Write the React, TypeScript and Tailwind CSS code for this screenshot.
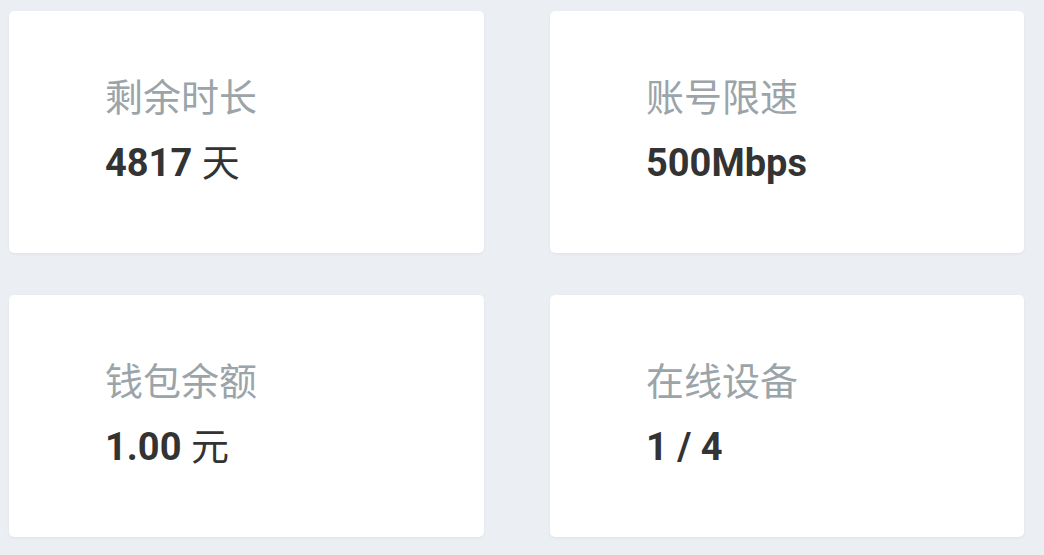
type Stat = {
  label: string;
  value: string;
  unit?: string;
};

const stats: Stat[] = [
  { label: "剩余时长", value: "4817", unit: "天" },
  { label: "账号限速", value: "500Mbps" },
  { label: "钱包余额", value: "1.00", unit: "元" },
  { label: "在线设备", value: "1 / 4" },
];

function StatCard({ stat }: { stat: Stat }) {
  return (
    <section className="flex h-[242px] flex-col justify-center rounded-[5px] bg-white pb-[4px] pl-[96px] shadow-[0_1px_3px_rgba(0,0,0,0.06)]">
      <p className="text-[38px] leading-[44px] text-[#9aa4a9]">{stat.label}</p>
      <p className="mt-[22px] text-[38px] leading-[42px] font-bold text-[#333333]">
        {stat.value}
        {stat.unit && <span className="font-normal"> {stat.unit}</span>}
      </p>
    </section>
  );
}

export default function App() {
  return (
    <div
      className="min-h-[555px] w-[1044px] bg-[#ebeff4] pt-[11px] pl-[9px]"
      style={{ fontFamily: 'Roboto, "Noto Sans CJK SC", sans-serif' }}
    >
      <div className="grid grid-cols-[475px_474px] gap-x-[66px] gap-y-[42px]">
        {stats.map((stat) => (
          <StatCard key={stat.label} stat={stat} />
        ))}
      </div>
    </div>
  );
}
